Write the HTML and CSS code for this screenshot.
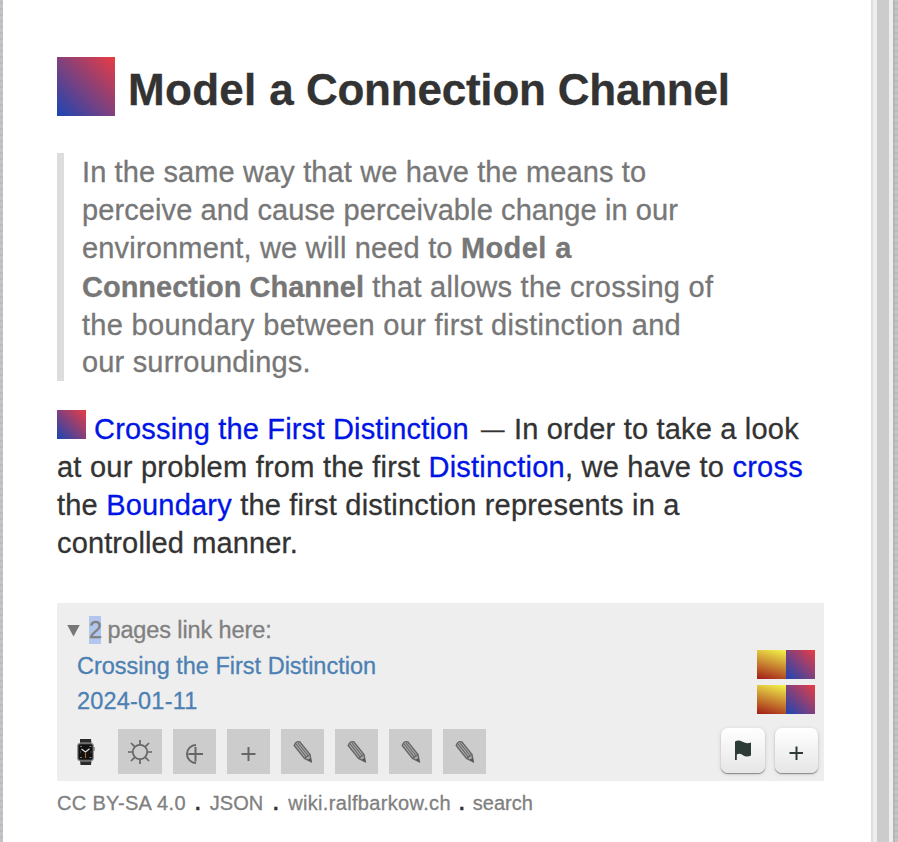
FILE: index.html
```html
<!DOCTYPE html>
<html lang="en">
<head>
<meta charset="utf-8">
<title>Model a Connection Channel</title>
<link rel="stylesheet" href="styles.css">
</head>
<body>
<svg class="defs" aria-hidden="true">
  <symbol id="pencil" viewBox="0 0 20 24">
    <path d="M1.200 5.500 11.500 18.500 18.300 21.800 17 14.500 7 2Q3 .5 1.200 5.500Z" fill="#aaa" stroke="#666" stroke-width="1.400"/>
    <path d="M3.200 4 13.500 17.300M5 3 15.300 16" fill="none" stroke="#666" stroke-width="1.100"/>
    <path d="M11.500 18.500 17 14.500" fill="none" stroke="#666" stroke-width="1.200"/>
    <path d="M14.500 19.700 18.600 22.300 17.700 18Z" fill="#555"/>
  </symbol>
</svg>
<div class="main">
  <article class="page">
    <h1><i class="flag large"></i><span class="title"><span class="lead">Model a</span> Connection Channel</span></h1>
    <blockquote>
      <span class="line q1">In the same way that we have the means to</span>
      <span class="line q2">perceive and cause perceivable change in our</span>
      <span class="line q3">environment, we will need to <b>Model a</b></span>
      <span class="line q4"><b>Connection Channel</b> that allows the crossing of</span>
      <span class="line q5">the boundary between our first distinction and</span>
      <span class="line q6">our surroundings.</span>
    </blockquote>
    <div class="story">
      <span class="line p1"><i class="flag small"></i><a>Crossing the First Distinction</a> <span class="dash">—</span> In order to take a look</span>
      <span class="line p2">at our problem from the first <a>Distinction</a>, we have to <a>cross</a></span>
      <span class="line p3">the <a>Boundary</a> the first distinction represents in a</span>
      <span class="line p4">controlled manner.</span>
    </div>
    <section class="journal">
      <div class="summary"><i class="marker"></i><span><mark>2</mark> pages link here:</span></div>
      <div class="backlink"><a>Crossing the First Distinction</a><span class="flags"><i class="flag gold"></i><i class="flag small"></i></span></div>
      <div class="backlink"><a class="date">2024-01-11</a><span class="flags"><i class="flag gold"></i><i class="flag small"></i></span></div>
      <div class="actions">
        <span class="action watch"><svg width="20" height="28" viewBox="0 0 20 28"><path d="M4 1h11l.5 5v16l-.5 5H4.500L4 22V6z" fill="#2b2b2b"/><rect x="1.500" y="5" width="16" height="18" rx="3" fill="#444" stroke="#999" stroke-width="1"/><rect x="2.800" y="6.600" width="13.400" height="14.800" rx="1.500" fill="#111"/><path d="M18 9v4" stroke="#777" stroke-width="1.300"/><path d="m5.500 11 4 3 4-3.300" fill="none" stroke="#ddd" stroke-width="1.200"/><path d="M9.500 14.500v5.500" stroke="#a8672d" stroke-width="1.200"/><path d="M4 8.500h2m7.500 0h2M4 14h1m9.500 0h1M4 19.500h2m7.500 0h2" stroke="#777" stroke-width="1"/></svg></span>
        <span class="action"><svg width="44" height="45" viewBox="0 0 44 45"><g fill="none" stroke="#666" stroke-width="1.700"><circle cx="22" cy="23" r="7.200"/><path d="M22 15.500v-4.500M22 30.500v4.500M14.500 23h-4.500M29.500 23h4.500M16.700 17.700l-3.700-3.700M27.300 17.700 31 14M16.700 28.300 13 32M27.300 28.300 31 32"/></g></svg></span>
        <span class="action"><svg width="43" height="45" viewBox="0 0 43 45"><path d="M23 16A9 9 0 0 0 23 34M22.500 18v14.500M15.500 25H30" fill="none" stroke="#666" stroke-width="2"/></svg></span>
        <span class="action"><svg width="43" height="45" viewBox="0 0 43 45"><path d="M21.500 18v14M14.500 25h14" stroke="#666" stroke-width="2"/></svg></span>
        <span class="action"><svg width="20" height="24"><use href="#pencil"/></svg></span>
        <span class="action"><svg width="20" height="24"><use href="#pencil"/></svg></span>
        <span class="action"><svg width="20" height="24"><use href="#pencil"/></svg></span>
        <span class="action"><svg width="20" height="24"><use href="#pencil"/></svg></span>
        <span class="controls">
          <span class="button"><svg width="43" height="46" viewBox="0 0 43 46"><path d="M14 13.500Q17.500 11.500 21.500 13.800T30 14.600V27.500Q25.500 29.500 22 27.200T15.800 26.500V32H14Z" fill="#2c3b36"/></svg></span>
          <span class="button"><svg width="43" height="46" viewBox="0 0 43 46"><path d="M21.500 18.500v13.500M14.500 25h13.500" stroke="#2c3b36" stroke-width="2"/></svg></span>
        </span>
      </div>
    </section>
    <footer><span class="license">CC BY-SA 4.0</span><b>.</b><span class="json">JSON</span><b>.</b><span class="site">wiki.ralfbarkow.ch</span><b>.</b><span class="search">search</span></footer>
  </article>
  <div class="scroll"></div>
</div>
</body>
</html>
```
FILE: styles.css
```css
* { box-sizing: border-box; }
html, body { height: 100%; }
body {
  margin: 0;
  overflow: hidden;
  color: #333;
  font: 29px/38px "Liberation Sans", Arial, sans-serif;
  -webkit-text-stroke: .3px;
  background: repeating-linear-gradient(0deg, transparent 0 4px, #acadb066 4px 6px), repeating-linear-gradient(90deg, #c3c4c7 0 3px, #b6b7b9 3px 5px);
}
.defs { position: absolute; width: 0; height: 0; }
a { color: #0014e6; }
.main { display: flex; height: 842px; margin: 0 5px 0 3px; }
.page { width: 868px; padding: 57px 47px 0 54px; background: #fff; }
.scroll { width: 22px; border-left: 2px solid #ddd; background: linear-gradient(90deg, #eee 4px, #ccc 4px 16px, #eee 16px); }
.flag { display: inline-block; flex: none; width: 29px; height: 29px; background: linear-gradient(45deg, #1b45b4, #e93c44); }
.flag.large { width: 58px; height: 59px; }
.flag.gold { background: linear-gradient(15deg, #a21c16, #f3f64c); }
h1 { display: flex; height: 59px; margin: 0 0 37px; font-size: 44px; line-height: 66px; letter-spacing: -.22px; white-space: nowrap; }
.title { margin-left: 13px; }
.lead { letter-spacing: .3px; }
blockquote { height: 228px; margin: 0 0 29px; padding-left: 18px; border-left: 7px solid #ddd; color: #777; }
.line { display: block; height: 38px; white-space: nowrap; }
.q1 { letter-spacing: .12px; }
.q2 { letter-spacing: .1px; }
.q3 { letter-spacing: .17px; }
.q3 b { letter-spacing: .4px; }
.q4 { letter-spacing: .27px; line-height: 40px; }
.q4 b { letter-spacing: 0; }
.q5 { letter-spacing: .3px; line-height: 40px; }
.q6 { letter-spacing: .18px; }
.story { height: 193px; }
.p1 { letter-spacing: .19px; }
.p1 .flag { margin-right: 8px; vertical-align: 0; }
.dash { margin: 0 1px 0 4px; font-size: 23.500px; line-height: 1; vertical-align: 2px; }
.p2 { letter-spacing: .24px; }
.p3 { letter-spacing: .2px; }
.p4 { letter-spacing: .13px; }
.journal { height: 178px; padding: 10px 6px 0 7px; background: #eee; color: #808080; font-size: 23.500px; line-height: 35px; }
.summary { display: flex; align-items: center; height: 35px; padding-left: 3px; letter-spacing: -.11px; }
.marker { width: 13px; height: 12px; margin-right: 9px; background: #777; clip-path: polygon(0 0, 100% 0, 50% 100%); }
mark { display: inline-block; width: 12px; height: 28px; line-height: 29px; color: inherit; background: #b2c6ee; }
.backlink { display: flex; justify-content: space-between; height: 35px; padding: 0 3px 0 13px; }
.backlink a { color: #4c80b3; line-height: 37px; }
.backlink .date { letter-spacing: .2px; }
.flags { display: flex; padding-top: 2px; }
.actions { display: flex; gap: 11px; height: 46px; margin-top: 11px; }
.action { display: flex; align-items: center; justify-content: center; flex: none; width: 43px; height: 45px; background: #ccc; }
.action:nth-child(2) { width: 44px; }
.watch { width: 43px; background: none; }
.controls { display: flex; gap: 10px; margin-left: auto; margin-top: -1px; }
.button { width: 43.500px; height: 45px; border-radius: 7px; background: linear-gradient(#fff, #e6e6e6); box-shadow: 0 1px 1px -.5px #888, 0 1px 4px #ccc; }
svg { display: block; }
footer { display: flex; margin-top: 4px; color: #808080; font-size: 20px; line-height: 36px; white-space: nowrap; }
.license, .site { letter-spacing: .33px; }
footer b { width: 24px; color: #333; text-align: center; }
.json + b { width: 25px; }
.site + b { width: 22px; }
```
